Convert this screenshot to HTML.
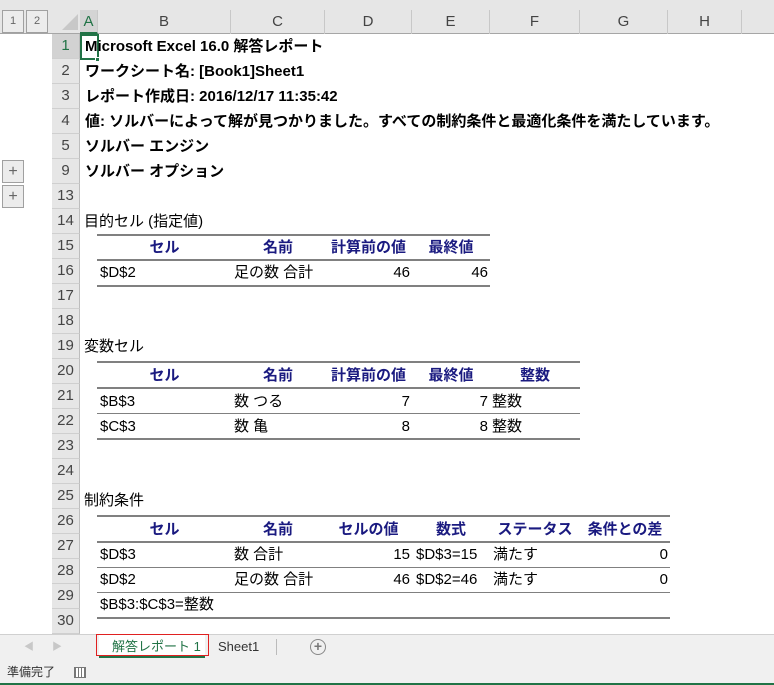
<!DOCTYPE html>
<html><head><meta charset="utf-8"><style>
*{margin:0;padding:0;box-sizing:border-box}
body{width:774px;height:685px;overflow:hidden;background:#fff;position:relative;font-family:"Liberation Sans","Noto Sans CJK JP",sans-serif;font-size:15px;color:#000}
div{position:absolute}
.t{white-space:nowrap;line-height:25px;height:25px}
.b{font-weight:bold}
.h{font-weight:bold;color:#1a1a80;text-align:center}
.r{text-align:right}
.ln{height:1px;background:#808080}
.lt{height:2px;background:#808080}
.rh{left:52px;width:28px;height:25px;line-height:24px;text-align:center;color:#444;font-size:15px;background:#e6e6e6;border-bottom:1px solid #cfcfcf;border-right:1px solid #bdbdbd}
.ch{top:10px;height:24px;line-height:24px;text-align:center;color:#444;font-size:15px;border-right:1px solid #c8c8c8}
.btn{width:22px;height:23px;border:1px solid #a0a0a0;background:#ececec;color:#666;text-align:center;line-height:21px}
</style></head><body>
<div style="left:0;top:0;width:774px;height:34px;background:#e6e6e6;border-bottom:1px solid #a6a6a6"></div>
<div style="left:0;top:34px;width:52px;height:600px;background:#fff"></div>
<div class="btn" style="left:2px;top:10px;font-size:11px">1</div>
<div class="btn" style="left:26px;top:10px;font-size:11px">2</div>
<div style="left:62px;top:14px;width:0;height:0;border-left:16px solid transparent;border-bottom:16px solid #c8c8c8"></div>
<div class="ch" style="left:80px;width:18px;background:#d4d4d4;color:#217346;border-bottom:2px solid #217346">A</div>
<div class="ch" style="left:98px;width:133px">B</div>
<div class="ch" style="left:231px;width:94px">C</div>
<div class="ch" style="left:325px;width:87px">D</div>
<div class="ch" style="left:412px;width:78px">E</div>
<div class="ch" style="left:490px;width:90px">F</div>
<div class="ch" style="left:580px;width:88px">G</div>
<div class="ch" style="left:668px;width:74px">H</div>
<div class="btn" style="left:2px;top:160px;font-size:16px">+</div>
<div class="btn" style="left:2px;top:185px;font-size:16px">+</div>

<div class="rh" style="top:34px;background:#d2d2d2;color:#217346">1</div>
<div class="rh" style="top:59px">2</div>
<div class="rh" style="top:84px">3</div>
<div class="rh" style="top:109px">4</div>
<div class="rh" style="top:134px">5</div>
<div class="rh" style="top:159px">9</div>
<div class="rh" style="top:184px">13</div>
<div class="rh" style="top:209px">14</div>
<div class="rh" style="top:234px">15</div>
<div class="rh" style="top:259px">16</div>
<div class="rh" style="top:284px">17</div>
<div class="rh" style="top:309px">18</div>
<div class="rh" style="top:334px">19</div>
<div class="rh" style="top:359px">20</div>
<div class="rh" style="top:384px">21</div>
<div class="rh" style="top:409px">22</div>
<div class="rh" style="top:434px">23</div>
<div class="rh" style="top:459px">24</div>
<div class="rh" style="top:484px">25</div>
<div class="rh" style="top:509px">26</div>
<div class="rh" style="top:534px">27</div>
<div class="rh" style="top:559px">28</div>
<div class="rh" style="top:584px">29</div>
<div class="rh" style="top:609px">30</div>

<div style="left:80px;top:34px;width:19px;height:26px;border:2px solid #217346"></div>
<div style="left:95px;top:57px;width:5px;height:5px;background:#217346;border:1px solid #fff"></div>

<div class="t b" style="left:85px;top:34px">Microsoft Excel 16.0 解答レポート</div>
<div class="t b" style="left:85px;top:59px">ワークシート名: [Book1]Sheet1</div>
<div class="t b" style="left:85px;top:84px">レポート作成日: 2016/12/17 11:35:42</div>
<div class="t b" style="left:85px;top:109px">値: ソルバーによって解が見つかりました。すべての制約条件と最適化条件を満たしています。</div>
<div class="t b" style="left:85px;top:134px">ソルバー エンジン</div>
<div class="t b" style="left:85px;top:159px">ソルバー オプション</div>

<div class="t" style="left:84px;top:209px">目的セル (指定値)</div>
<div class="lt" style="left:97px;top:234px;width:393px"></div>
<div class="t h" style="left:98px;top:235px;width:133px">セル</div>
<div class="t h" style="left:231px;top:235px;width:94px">名前</div>
<div class="t h" style="left:325px;top:235px;width:87px">計算前の値</div>
<div class="t h" style="left:412px;top:235px;width:78px">最終値</div>
<div class="lt" style="left:97px;top:259px;width:393px"></div>
<div class="t" style="left:100px;top:260px">$D$2</div>
<div class="t" style="left:234px;top:260px">足の数 合計</div>
<div class="t r" style="left:325px;top:260px;width:85px">46</div>
<div class="t r" style="left:412px;top:260px;width:76px">46</div>
<div class="lt" style="left:97px;top:285px;width:393px"></div>

<div class="t" style="left:84px;top:334px">変数セル</div>
<div class="lt" style="left:97px;top:361px;width:483px"></div>
<div class="t h" style="left:98px;top:363px;width:133px">セル</div>
<div class="t h" style="left:231px;top:363px;width:94px">名前</div>
<div class="t h" style="left:325px;top:363px;width:87px">計算前の値</div>
<div class="t h" style="left:412px;top:363px;width:78px">最終値</div>
<div class="t h" style="left:490px;top:363px;width:90px">整数</div>
<div class="lt" style="left:97px;top:387px;width:483px"></div>
<div class="t" style="left:100px;top:389px">$B$3</div>
<div class="t" style="left:234px;top:389px">数 つる</div>
<div class="t r" style="left:325px;top:389px;width:85px">7</div>
<div class="t r" style="left:412px;top:389px;width:76px">7</div>
<div class="t" style="left:492px;top:389px">整数</div>
<div class="ln" style="left:97px;top:413px;width:483px"></div>
<div class="t" style="left:100px;top:414px">$C$3</div>
<div class="t" style="left:234px;top:414px">数 亀</div>
<div class="t r" style="left:325px;top:414px;width:85px">8</div>
<div class="t r" style="left:412px;top:414px;width:76px">8</div>
<div class="t" style="left:492px;top:414px">整数</div>
<div class="lt" style="left:97px;top:438px;width:483px"></div>

<div class="t" style="left:84px;top:488px">制約条件</div>
<div class="lt" style="left:97px;top:515px;width:573px"></div>
<div class="t h" style="left:98px;top:517px;width:133px">セル</div>
<div class="t h" style="left:231px;top:517px;width:94px">名前</div>
<div class="t h" style="left:325px;top:517px;width:87px">セルの値</div>
<div class="t h" style="left:412px;top:517px;width:78px">数式</div>
<div class="t h" style="left:490px;top:517px;width:90px">ステータス</div>
<div class="t h" style="left:580px;top:517px;width:90px">条件との差</div>
<div class="lt" style="left:97px;top:541px;width:573px"></div>
<div class="t" style="left:100px;top:542px">$D$3</div>
<div class="t" style="left:234px;top:542px">数 合計</div>
<div class="t r" style="left:325px;top:542px;width:85px">15</div>
<div class="t" style="left:416px;top:542px">$D$3=15</div>
<div class="t" style="left:493px;top:542px">満たす</div>
<div class="t r" style="left:580px;top:542px;width:88px">0</div>
<div class="ln" style="left:97px;top:567px;width:573px"></div>
<div class="t" style="left:100px;top:567px">$D$2</div>
<div class="t" style="left:234px;top:567px">足の数 合計</div>
<div class="t r" style="left:325px;top:567px;width:85px">46</div>
<div class="t" style="left:416px;top:567px">$D$2=46</div>
<div class="t" style="left:493px;top:567px">満たす</div>
<div class="t r" style="left:580px;top:567px;width:88px">0</div>
<div class="ln" style="left:97px;top:592px;width:573px"></div>
<div class="t" style="left:100px;top:592px">$B$3:$C$3=整数</div>
<div class="lt" style="left:97px;top:617px;width:573px"></div>

<div style="left:0;top:634px;width:774px;height:26px;background:#f0f0f0;border-top:1px solid #d0d0d0"></div>
<div class="t" style="left:24px;top:635px;color:#c8c8c8;font-size:10px">◀</div>
<div class="t" style="left:52px;top:635px;color:#c8c8c8;font-size:10px">▶</div>
<div style="left:99px;top:634px;width:106px;height:24px;background:#fff;border-bottom:2px solid #217346"></div>
<div class="t" style="left:112px;top:634px;color:#217346;font-size:13px">解答レポート 1</div>
<div style="left:96px;top:634px;width:113px;height:22px;border:1px solid #e02020"></div>
<div class="t" style="left:218px;top:634px;color:#333;font-size:13px">Sheet1</div>
<div style="left:276px;top:639px;width:1px;height:16px;background:#bbb"></div>
<div style="left:310px;top:639px;width:16px;height:16px;border:1.5px solid #888;border-radius:50%;color:#777;font-size:14px;line-height:13px;text-align:center;font-weight:bold">+</div>
<div style="left:0;top:660px;width:774px;height:25px;background:#f0f0f0;border-bottom:2px solid #217346"></div>
<div class="t" style="left:7px;top:660px;font-size:12px;color:#333">準備完了</div>
<div style="left:74px;top:667px;width:12px;height:11px;border:1px solid #777;background:repeating-linear-gradient(90deg,#777 0 1px,#fff 1px 3px)"></div>
</body></html>
